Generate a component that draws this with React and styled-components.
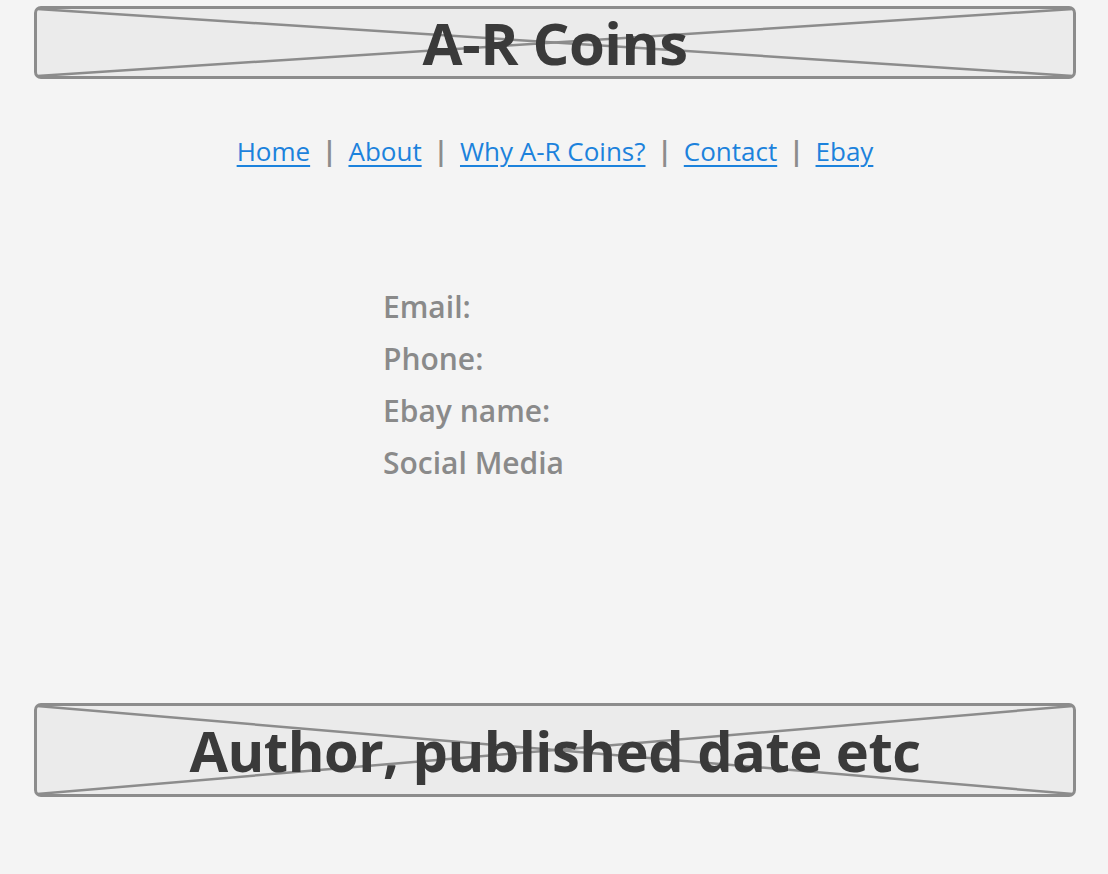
import React from "react";
import styled, { createGlobalStyle } from "styled-components";

const GlobalStyle = createGlobalStyle`
  body {
    margin: 0;
    background: #f4f4f4;
    font-family: "Open Sans", "Liberation Sans", sans-serif;
  }
`;

const links = ["Home", "About", "Why A-R Coins?", "Contact", "Ebay"];
const details = ["Email:", "Phone:", "Ebay name:", "Social Media"];

const Placeholder = ({ height, size, children }) => (
  <Box $height={height}>
    <Cross viewBox="0 0 100 100" preserveAspectRatio="none">
      <line x1="0" y1="0" x2="100" y2="100" vectorEffect="non-scaling-stroke" />
      <line x1="0" y1="100" x2="100" y2="0" vectorEffect="non-scaling-stroke" />
    </Cross>
    <BoxTitle $size={size}>{children}</BoxTitle>
  </Box>
);

const App = () => {
  return (
    <Page>
      <GlobalStyle />
      <Placeholder height={73} size={58}>A-R Coins</Placeholder>
      <Nav>
        {links.map((l, i) => (
          <React.Fragment key={l}>
            {i > 0 && <Sep>|</Sep>}
            <NavLink href="#">{l}</NavLink>
          </React.Fragment>
        ))}
      </Nav>
      <Details>
        {details.map((d) => (
          <Detail key={d}>{d}</Detail>
        ))}
      </Details>
      <Placeholder height={94} size={56}>Author, published date etc</Placeholder>
    </Page>
  );
};

const Page = styled.div`
  display: flex;
  flex-direction: column;
  padding: 6px 32px 0 34px;
  min-height: 868px;
`;

const Box = styled.div`
  position: relative;
  box-sizing: border-box;
  height: ${(p) => p.$height}px;
  border: 3px solid #8c8c8c;
  border-radius: 7px;
  background: #ebebeb;
  display: flex;
  align-items: center;
  justify-content: center;
`;

const Cross = styled.svg`
  position: absolute;
  inset: 0;
  width: 100%;
  height: 100%;

  line {
    stroke: #8c8c8c;
    stroke-width: 2.5;
  }
`;

const BoxTitle = styled.h1`
  position: relative;
  margin: 0;
  font-size: ${(p) => p.$size}px;
  font-weight: 700;
  color: #3a3a3a;
  letter-spacing: -0.5px;
  line-height: 1;
`;

const Nav = styled.nav`
  display: flex;
  justify-content: center;
  align-items: center;
  gap: 12px;
  margin-top: 54px;
  font-size: 26px;
`;

const NavLink = styled.a`
  color: #1c82dc;
  text-decoration: underline;
  text-underline-offset: 4px;
  text-decoration-thickness: 2px;
`;

const Sep = styled.span`
  color: #8c8c8c;
  font-weight: 700;
`;

const Details = styled.div`
  display: flex;
  flex-direction: column;
  margin: 112px 0 0 349px;
  height: 422px;
`;

const Detail = styled.div`
  color: #8a8a8a;
  font-size: 30px;
  font-weight: 600;
  line-height: 52px;
`;

export default App;
